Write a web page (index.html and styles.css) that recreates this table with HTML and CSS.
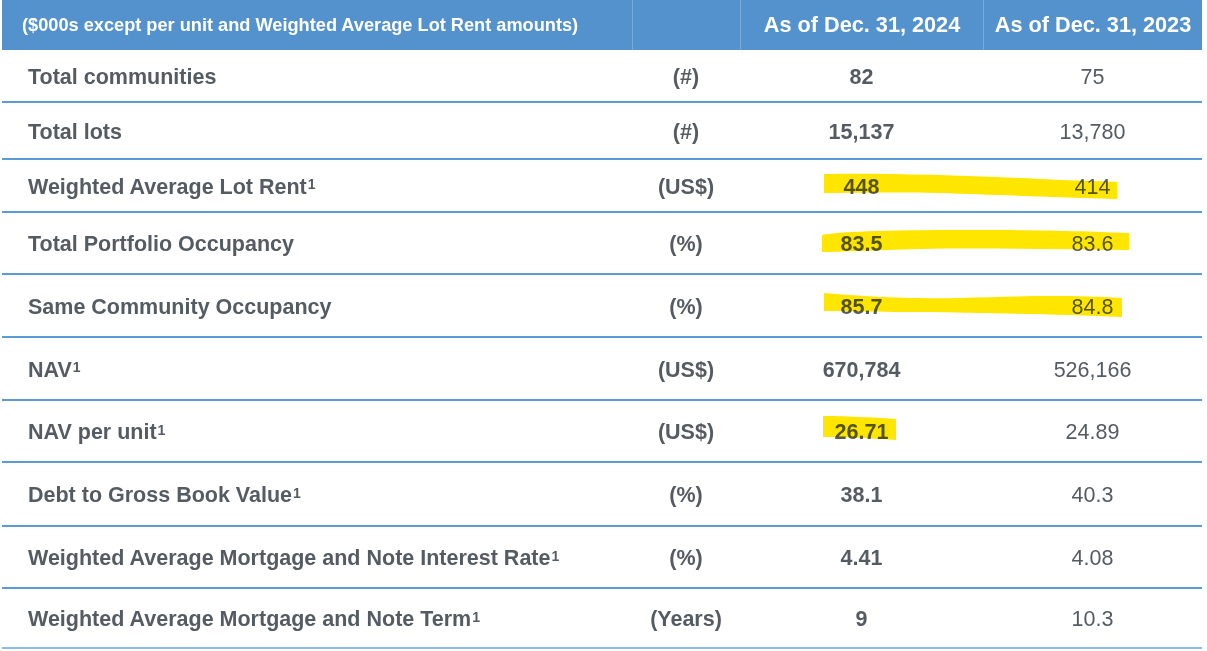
FILE: index.html
```html
<!DOCTYPE html>
<html lang="en">
<head>
<meta charset="utf-8">
<title>Portfolio summary</title>
<link rel="stylesheet" href="styles.css">
</head>
<body>
<div class="sheet">
  <div class="table">
    <div class="row head">
      <div class="cell label">($000s except per unit and Weighted Average Lot Rent amounts)</div>
      <div class="cell unit"></div>
      <div class="cell cur">As of Dec. 31, 2024</div>
      <div class="cell prev">As of Dec. 31, 2023</div>
    </div>
    <div class="row h1">
      <div class="cell label">Total communities</div>
      <div class="cell unit">(#)</div>
      <div class="cell cur">82</div>
      <div class="cell prev">75</div>
    </div>
    <div class="row h2">
      <div class="cell label">Total lots</div>
      <div class="cell unit">(#)</div>
      <div class="cell cur">15,137</div>
      <div class="cell prev">13,780</div>
    </div>
    <div class="row h3">
      <div class="cell label">Weighted Average Lot Rent<sup class="fn">1</sup></div>
      <div class="cell unit">(US$)</div>
      <div class="cell cur">448</div>
      <div class="cell prev">414</div>
    </div>
    <div class="row h4">
      <div class="cell label">Total Portfolio Occupancy</div>
      <div class="cell unit">(%)</div>
      <div class="cell cur">83.5</div>
      <div class="cell prev">83.6</div>
    </div>
    <div class="row h5">
      <div class="cell label">Same Community Occupancy</div>
      <div class="cell unit">(%)</div>
      <div class="cell cur">85.7</div>
      <div class="cell prev">84.8</div>
    </div>
    <div class="row h6">
      <div class="cell label">NAV<sup class="fn">1</sup></div>
      <div class="cell unit">(US$)</div>
      <div class="cell cur">670,784</div>
      <div class="cell prev">526,166</div>
    </div>
    <div class="row h7">
      <div class="cell label">NAV per unit<sup class="fn">1</sup></div>
      <div class="cell unit">(US$)</div>
      <div class="cell cur">26.71</div>
      <div class="cell prev">24.89</div>
    </div>
    <div class="row h8">
      <div class="cell label">Debt to Gross Book Value<sup class="fn">1</sup></div>
      <div class="cell unit">(%)</div>
      <div class="cell cur">38.1</div>
      <div class="cell prev">40.3</div>
    </div>
    <div class="row h9">
      <div class="cell label">Weighted Average Mortgage and Note Interest Rate<sup class="fn">1</sup></div>
      <div class="cell unit">(%)</div>
      <div class="cell cur">4.41</div>
      <div class="cell prev">4.08</div>
    </div>
    <div class="row h10 last">
      <div class="cell label">Weighted Average Mortgage and Note Term<sup class="fn">1</sup></div>
      <div class="cell unit">(Years)</div>
      <div class="cell cur">9</div>
      <div class="cell prev">10.3</div>
    </div>
  </div>
  <svg class="marks" width="1207" height="651" viewBox="0 0 1207 651" aria-hidden="true">
    <path d="M824,174 C880,173 960,175 1040,179 C1080,181 1105,181 1117,182 L1117,199 C1080,198 1000,195 940,193 C890,192 850,193 824,193 Z"/>
    <path d="M822,235 C840,231 900,230 980,230 C1060,230 1110,232 1129,233 L1129,250 C1060,249 980,248 920,249 C870,250 840,252 822,252 Z"/>
    <path d="M824,293 C860,296 900,299 960,298 C1020,296 1070,295 1122,298 L1122,317 C1060,314 980,313 920,312 C870,312 840,311 824,311 Z"/>
    <path d="M823,416 C850,416 880,418 896,419 L896,440 C870,438 845,437 823,437 Z"/>
  </svg>
</div>
</body>
</html>
```

FILE: styles.css
```css
html, body {
  margin: 0;
  padding: 0;
  background: #ffffff;
}

body {
  font-family: "Liberation Sans", Arimo, Arial, sans-serif;
  color: #555b63;
}

.sheet {
  position: relative;
  width: 1207px;
  height: 651px;
  overflow: hidden;
  padding-left: 2px;
  box-sizing: border-box;
}

.table {
  width: 1200px;
  display: flex;
  flex-direction: column;
}

.row {
  display: grid;
  grid-template-columns: 630px 108px 243px 219px;
  box-sizing: border-box;
  border-bottom: 2px solid #5b9bd5;
  font-size: 21.5px;
}

.row .cell {
  padding-top: 3px;
}

.row.head {
  height: 50px;
  background: #5492ce;
  color: #ffffff;
  border-bottom: none;
  font-size: 21.7px;
}

.row.head .cell {
  font-weight: bold;
  padding-top: 0;
}

.row.head .cell + .cell {
  border-left: 1px solid #79aadb;
}

.row.head .label {
  font-size: 18.2px;
  padding-left: 20px;
}

.cell {
  display: flex;
  align-items: center;
  justify-content: center;
  white-space: nowrap;
}

.label {
  justify-content: flex-start;
  padding-left: 26px;
  font-weight: bold;
}

.unit {
  font-weight: bold;
}

.cur {
  font-weight: bold;
}

.prev {
  font-weight: normal;
}

.fn {
  font-size: 14px;
  line-height: 0;
  position: relative;
  top: -3px;
  margin-left: 1px;
}

.h1 { height: 53px; }
.h2 { height: 57px; }
.h3 { height: 53px; }
.h4 { height: 62px; }
.h5 { height: 63px; }
.h6 { height: 63px; }
.h7 { height: 62px; }
.h8 { height: 64px; }
.h9 { height: 62px; }
.h10 { height: 60px; }

.row.last {
  border-bottom-color: #8dbbe6;
}

.marks {
  position: absolute;
  left: 0;
  top: 0;
  pointer-events: none;
  mix-blend-mode: multiply;
}

.marks path {
  fill: #ffe600;
}
```
